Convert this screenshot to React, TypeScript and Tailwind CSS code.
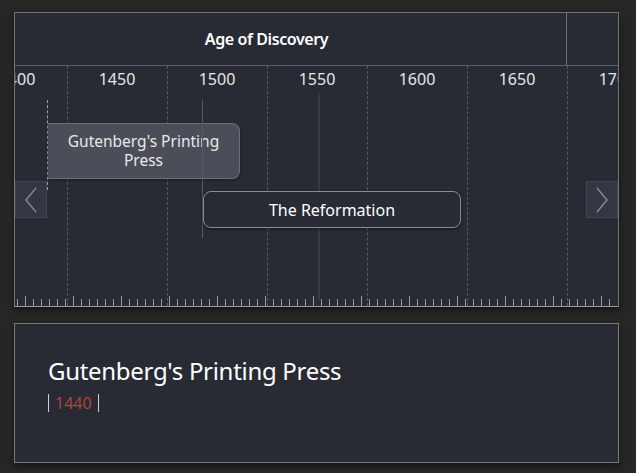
const years = [1400, 1450, 1500, 1550, 1600, 1650, 1700];
const grid = [52, 152, 252, 352, 452, 552];
const ticks = Array.from({ length: 75 }, (_, i) => i);

function Chevron({ dir }: { dir: "left" | "right" }) {
  return (
    <svg width="14" height="26" viewBox="0 0 14 26" fill="none">
      <polyline
        points={dir === "left" ? "12,1 2,13 12,25" : "2,1 12,13 2,25"}
        stroke="#868a94"
        strokeWidth="1.4"
      />
    </svg>
  );
}

function Timeline() {
  return (
    <div className="relative w-[605px] h-[295px] bg-[#282b34] border border-[#727377] border-b-[#9a9a9a] shadow-[0_3px_6px_rgba(0,0,0,0.5)] overflow-hidden">
      {/* era band */}
      <div className="relative h-[53px] border-b border-[#5d6068]">
        <div className="absolute top-0 left-[-48px] w-[600px] h-full border-r border-[#6f7075] flex items-center justify-center text-[16px] font-semibold text-white tracking-[-0.4px]">
          Age of Discovery
        </div>
      </div>

      {/* years */}
      <div className="relative h-[26px]">
        {years.map((y, i) => (
          <div
            key={y}
            className="absolute top-[1px] w-[60px] -ml-[30px] text-center text-[16px] text-[#e6e6e6]"
            style={{ left: 2 + i * 100 }}
          >
            {y}
          </div>
        ))}
      </div>

      {/* dashed grid */}
      {grid.map((x) => (
        <div
          key={x}
          className="absolute top-[53px] bottom-0 border-l border-dashed border-[#555963]"
          style={{ left: x }}
        />
      ))}
      <div className="absolute left-[303px] top-[80px] bottom-[6px] w-[2px] bg-[#363a46]" />

      {/* events */}
      <div className="absolute left-[32px] top-[87px] h-[90px] border-l border-dashed border-[#a0a0a0]" />
      <div className="absolute left-[33px] top-[110px] w-[192px] h-[56px] bg-[#4b4e58] border border-[#6e717a] border-l-0 rounded-r-[8px] flex items-center justify-center text-center text-[15.5px] leading-[19px] text-[#e8e8e8] shadow-[0_1px_3px_rgba(0,0,0,0.4)]">
        Gutenberg's Printing
        <br />
        Press
      </div>
      <div className="absolute left-[187px] top-[87px] h-[138px] border-l border-[#555963]" />
      <div className="absolute left-[188px] top-[178px] w-[258px] h-[37px] bg-[#282b34] border border-[#8b8c90] rounded-[8px] flex items-center justify-center text-[16px] text-white shadow-[0_1px_3px_rgba(0,0,0,0.5)]">
        The Reformation
      </div>

      {/* nav */}
      <button className="absolute left-0 top-[168px] w-[32px] h-[37px] bg-[#333743] border border-[#414552] flex items-center justify-center">
        <Chevron dir="left" />
      </button>
      <button className="absolute right-0 top-[168px] w-[32px] h-[37px] bg-[#333743] border border-[#414552] flex items-center justify-center">
        <Chevron dir="right" />
      </button>

      {/* ruler */}
      <div className="absolute left-0 right-0 bottom-0 h-[12px]">
        {ticks.map((i) => (
          <div
            key={i}
            className={
              "absolute bottom-0 w-px bg-[#9a9a9a] " +
              (i % 6 === 1 ? "h-[10px]" : "h-[7px]")
            }
            style={{ left: 2 + i * 8 }}
          />
        ))}
      </div>
    </div>
  );
}

function Detail() {
  return (
    <div className="w-[605px] h-[140px] bg-[#282b34] border border-[#7a7b7e] shadow-[0_3px_6px_rgba(0,0,0,0.5)] px-[33px] pt-[31px]">
      <h1 className="text-[24px] leading-[32px] text-white tracking-[-0.3px]">
        Gutenberg's Printing Press
      </h1>
      <div className="mt-[4px] flex items-center text-[16px]">
        <span className="w-px h-[18px] bg-[#cfcfcf]" />
        <span className="px-[6px] text-[#b1443c]">1440</span>
        <span className="w-px h-[18px] bg-[#cfcfcf]" />
      </div>
    </div>
  );
}

export default function App() {
  return (
    <div className="w-[636px] h-[473px] bg-[#262725] pt-[12px] pl-[14px] flex flex-col gap-[16px] font-['Noto_Sans',sans-serif] overflow-hidden">
      <Timeline />
      <Detail />
    </div>
  );
}
